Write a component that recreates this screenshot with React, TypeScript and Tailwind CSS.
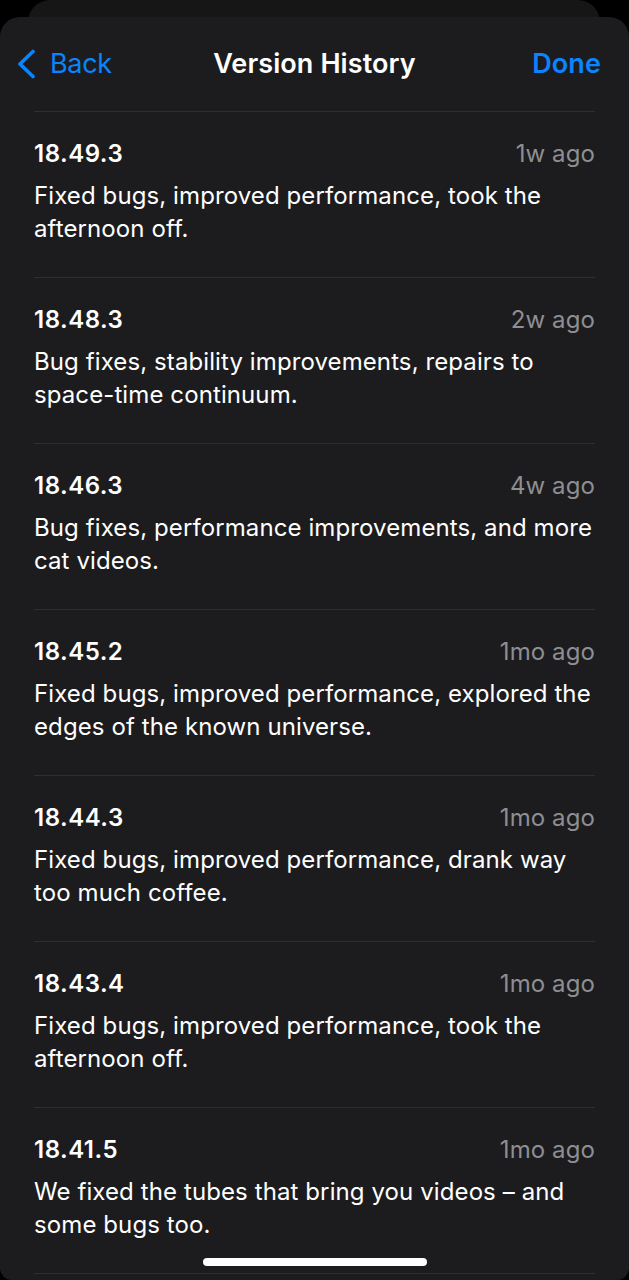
const versions = [
  {
    version: "18.49.3",
    when: "1w ago",
    notes: "Fixed bugs, improved performance, took the afternoon off.",
  },
  {
    version: "18.48.3",
    when: "2w ago",
    notes: "Bug fixes, stability improvements, repairs to space-time continuum.",
  },
  {
    version: "18.46.3",
    when: "4w ago",
    notes: "Bug fixes, performance improvements, and more cat videos.",
  },
  {
    version: "18.45.2",
    when: "1mo ago",
    notes: "Fixed bugs, improved performance, explored the edges of the known universe.",
  },
  {
    version: "18.44.3",
    when: "1mo ago",
    notes: "Fixed bugs, improved performance, drank way too much coffee.",
  },
  {
    version: "18.43.4",
    when: "1mo ago",
    notes: "Fixed bugs, improved performance, took the afternoon off.",
  },
  {
    version: "18.41.5",
    when: "1mo ago",
    notes: "We fixed the tubes that bring you videos – and some bugs too.",
  },
];

export default function App() {
  return (
    <div
      className="relative h-[1280px] w-[629px] overflow-hidden bg-black text-white"
      style={{ fontFamily: "Inter, 'Noto Sans', sans-serif" }}
    >
      {/* card stacked behind the sheet */}
      <div className="absolute left-[28px] right-[29px] top-0 h-[40px] rounded-t-[22px] bg-[#161617]" />

      <div className="absolute inset-x-0 top-[17px] bottom-0 rounded-t-[20px] rounded-b-[12px] bg-[#1c1c1e]">
        <header className="relative flex h-[94px] items-center justify-between px-[15px]">
          <button className="flex items-center gap-[13px] text-[#0a84ff]">
            <svg width="22" height="30" viewBox="0 0 22 30" fill="none">
              <path
                d="M18 2.5 L5 15 L18 27.5"
                stroke="currentColor"
                strokeWidth="3.6"
                strokeLinecap="round"
                strokeLinejoin="round"
              />
            </svg>
            <span className="text-[27px] tracking-[-0.3px]">Back</span>
          </button>
          <h1 className="absolute left-1/2 -translate-x-1/2 text-[27px] font-semibold tracking-[0.1px]">
            Version History
          </h1>
          <button className="pr-[13px] text-[27px] font-semibold tracking-[0.1px] text-[#0a84ff]">
            Done
          </button>
        </header>

        <ul className="mx-[34px] border-t border-[#2e2e31]">
          {versions.map((v) => (
            <li key={v.version} className="h-[166px] border-b border-[#2e2e31] pt-[26px]">
              <div className="flex items-baseline justify-between">
                <span className="text-[24px] font-semibold leading-[32px] tracking-[0.5px]">
                  {v.version}
                </span>
                <span className="text-[24px] leading-[32px] tracking-[0.1px] text-[#8e8e93]">
                  {v.when}
                </span>
              </div>
              <p className="mt-[9px] text-[24px] leading-[33px] tracking-[0.1px]">
                {v.notes}
              </p>
            </li>
          ))}
        </ul>

        <div className="absolute bottom-[14px] left-[203px] h-[8px] w-[224px] rounded-full bg-white" />
      </div>
    </div>
  );
}
